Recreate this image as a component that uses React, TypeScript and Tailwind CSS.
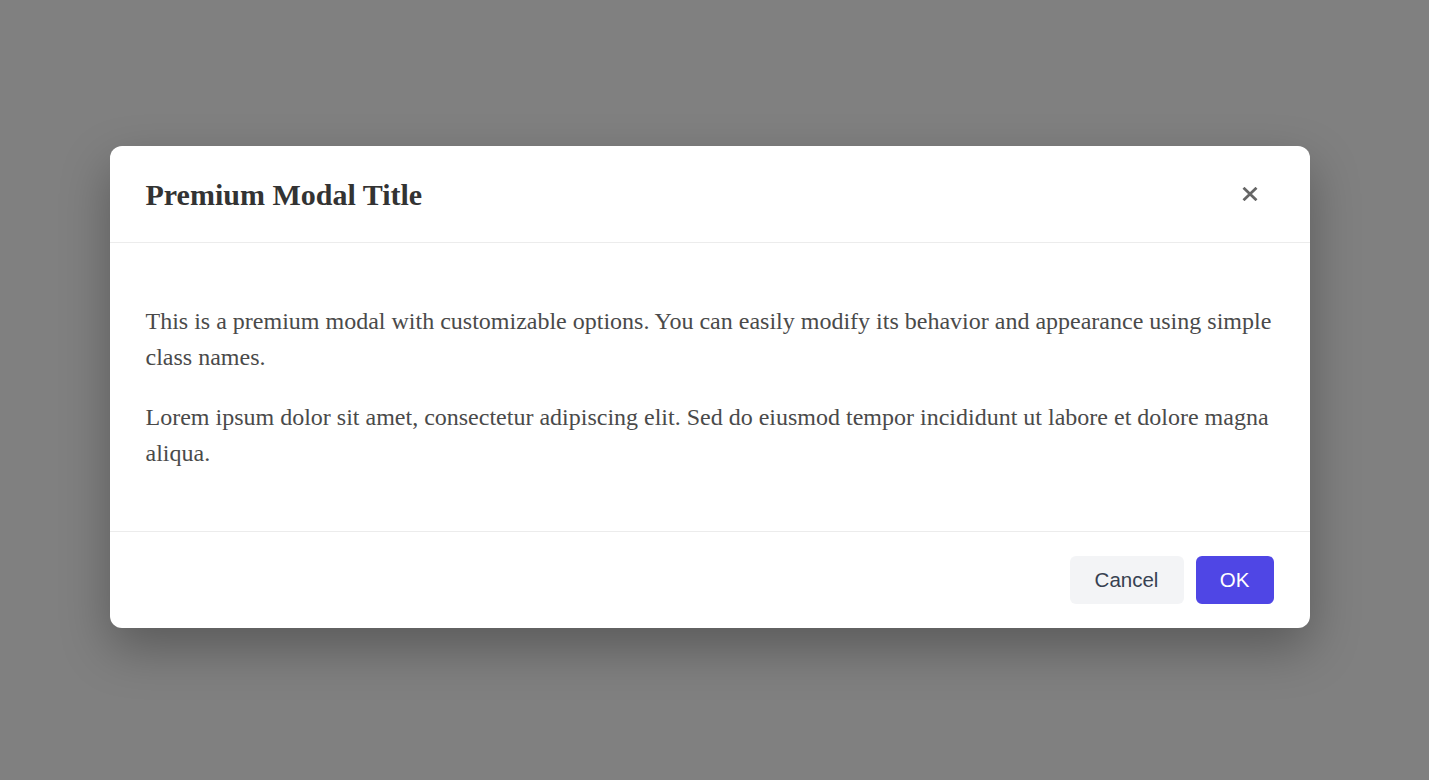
export default function App() {
    return (
        <div className="min-h-screen w-full bg-[#808080] flex items-center justify-center font-['Liberation_Serif',serif]">
            <div className="w-[1200px] bg-white rounded-xl shadow-[0_20px_50px_rgba(0,0,0,0.3)] -translate-y-[3px] -translate-x-[5px]">
                <div className="flex items-center justify-between h-[97px] px-9 border-b border-[#ececec]">
                    <h2 className="text-[30px] font-bold text-[#333]">Premium Modal Title</h2>
                    <button className="w-8 h-8 flex items-center justify-center text-[#666] mr-2">
                        <svg width="16" height="14" viewBox="0 0 16 14" fill="none" stroke="currentColor" strokeWidth="2.8" strokeLinecap="butt">
                            <path d="M1.5 0.8 L14.5 13.2 M14.5 0.8 L1.5 13.2" />
                        </svg>
                    </button>
                </div>
                <div className="px-9 py-[60px] flex flex-col gap-6 text-[24px] leading-9 text-[#4a4a4a]">
                    <p>This is a premium modal with customizable options. You can easily modify its behavior and appearance using simple class names.</p>
                    <p>Lorem ipsum dolor sit amet, consectetur adipiscing elit. Sed do eiusmod tempor incididunt ut labore et dolore magna aliqua.</p>
                </div>
                <div className="flex justify-end gap-3 px-9 py-6 border-t border-[#ececec] font-['Liberation_Sans',sans-serif] text-[20.5px]">
                    <button className="h-12 w-[114px] rounded-md bg-[#f3f4f6] text-[#374151]">Cancel</button>
                    <button className="h-12 w-[78px] rounded-md bg-[#4f46e5] text-white">OK</button>
                </div>
            </div>
        </div>
    )
}
